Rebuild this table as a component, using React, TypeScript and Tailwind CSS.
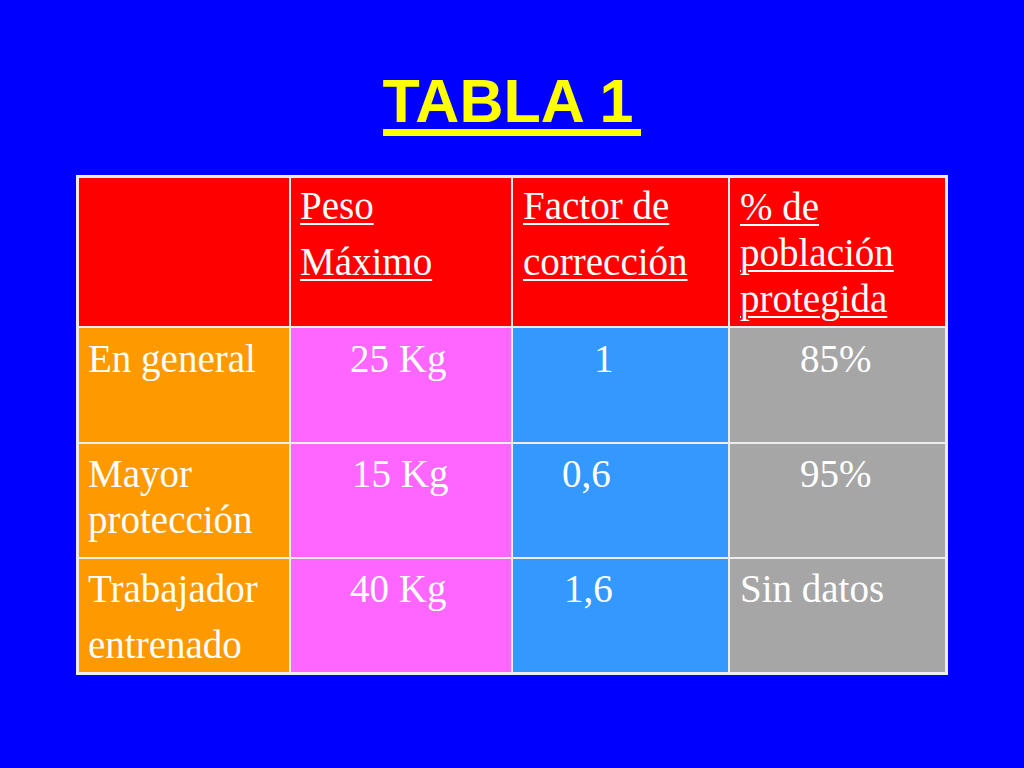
import React from "react";

type Cell = { lines: string[]; bg: string; cls: string; u?: boolean };

const RED = "bg-[#ff0000]";
const ORANGE = "bg-[#ff9900]";
const PINK = "bg-[#ff66ff]";
const BLUE = "bg-[#3399ff]";
const GRAY = "bg-[#a6a6a6]";

const rows: Cell[][] = [
  [
    { lines: [], bg: RED, cls: "" },
    { lines: ["Peso", "Máximo"], bg: RED, cls: "pl-[9px] pt-0 leading-[56px]", u: true },
    { lines: ["Factor de", "corrección"], bg: RED, cls: "pl-[10px] pt-0 leading-[56px]", u: true },
    { lines: ["% de", "población", "protegida"], bg: RED, cls: "pl-[10px] pt-[6px] leading-[46px]", u: true },
  ],
  [
    { lines: ["En general"], bg: ORANGE, cls: "pl-[9px] pt-[8px] leading-[46px]" },
    { lines: ["25 Kg"], bg: PINK, cls: "pl-[59px] pt-[8px] leading-[46px]" },
    { lines: ["1"], bg: BLUE, cls: "pl-[81px] pt-[8px] leading-[46px]" },
    { lines: ["85%"], bg: GRAY, cls: "pl-[70px] pt-[8px] leading-[46px]" },
  ],
  [
    { lines: ["Mayor", "protección"], bg: ORANGE, cls: "pl-[9px] pt-[7px] leading-[46px]" },
    { lines: ["15 Kg"], bg: PINK, cls: "pl-[61px] pt-[7px] leading-[46px]" },
    { lines: ["0,6"], bg: BLUE, cls: "pl-[49px] pt-[7px] leading-[46px]" },
    { lines: ["95%"], bg: GRAY, cls: "pl-[70px] pt-[7px] leading-[46px]" },
  ],
  [
    { lines: ["Trabajador", "entrenado"], bg: ORANGE, cls: "pl-[9px] pt-[2px] leading-[56px]" },
    { lines: ["40 Kg"], bg: PINK, cls: "pl-[59px] pt-[2px] leading-[56px]" },
    { lines: ["1,6"], bg: BLUE, cls: "pl-[51px] pt-[2px] leading-[56px]" },
    { lines: ["Sin datos"], bg: GRAY, cls: "pl-[10px] pt-[2px] leading-[56px]" },
  ],
];

export default function App() {
  return (
    <div className="w-full h-[768px] bg-[#0000ff] flex flex-col items-center overflow-hidden">
      <div className="mt-[73px] inline-block border-b-[7px] border-[#ffff00] pr-[8px] text-[61px] leading-[56px] font-bold text-[#ffff00] font-['Liberation_Sans',Arial,sans-serif]">
        TABLA 1
      </div>
      <div className="mt-[39px] w-[872px] p-[3px] bg-[#ececec] grid grid-cols-[210px_220px_215px_215px] grid-rows-[148px_114px_113px_113px] gap-[2px] font-['Liberation_Serif','Times_New_Roman',serif] text-[39px] text-white">
        {rows.map((row, ri) =>
          row.map((c, ci) => (
            <div key={`${ri}-${ci}`} className={`${c.bg} ${c.cls} whitespace-nowrap`}>
              {c.lines.map((l, li) => (
                <div key={li} className={c.u ? "underline decoration-[2px] underline-offset-[4px]" : ""}>
                  <span>{l}</span>
                </div>
              ))}
            </div>
          ))
        )}
      </div>
    </div>
  );
}
